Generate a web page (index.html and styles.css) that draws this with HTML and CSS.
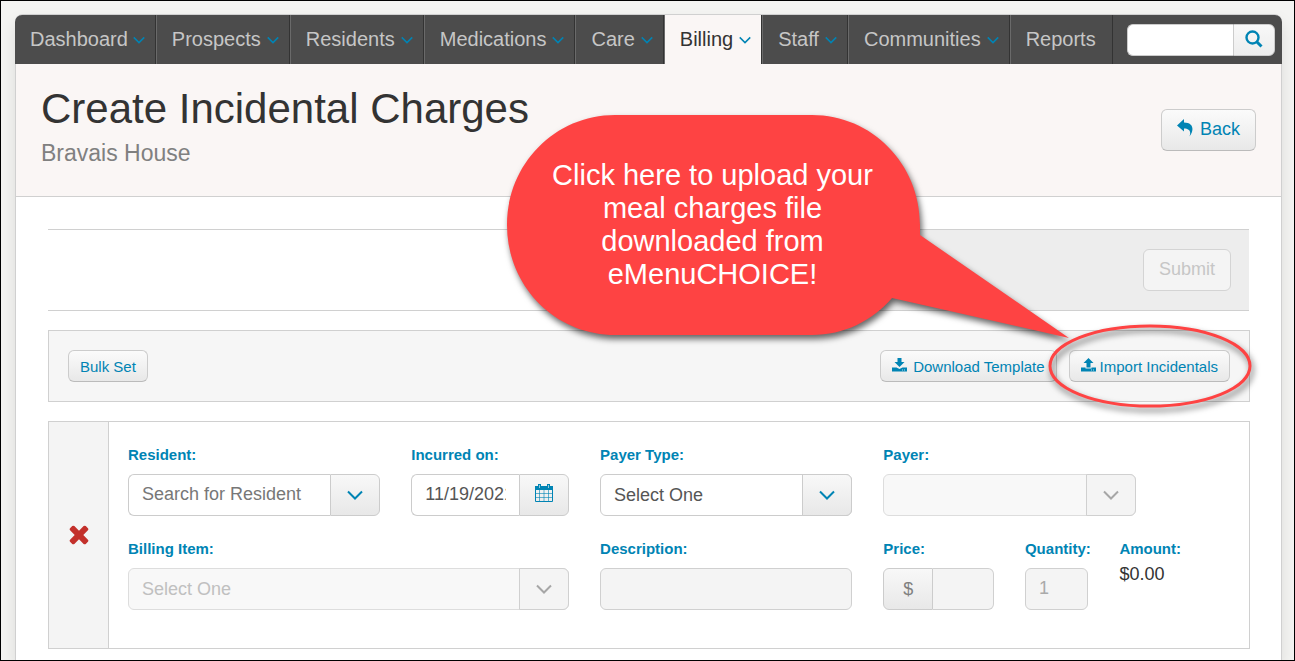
FILE: index.html
```html
<!DOCTYPE html>
<html lang="en">
<head>
    <meta charset="UTF-8">
    <meta name="viewport" content="width=device-width, initial-scale=1.0">
    <title>Create Incidental Charges</title>
    <link rel="stylesheet" href="styles.css">
</head>
<body>
    <svg class="sprite" aria-hidden="true">
        <symbol id="chevron" viewBox="0 0 16 10">
            <path d="M1 1.5 L8 8.5 L15 1.5" fill="none" stroke="currentColor" stroke-width="2"/>
        </symbol>
    </svg>

    <div class="page">
        <nav class="nav">
            <ul class="nav-list">
                <li><a href="#">Dashboard <svg class="caret"><use href="#chevron"/></svg></a></li>
                <li><a href="#">Prospects <svg class="caret"><use href="#chevron"/></svg></a></li>
                <li><a href="#">Residents <svg class="caret"><use href="#chevron"/></svg></a></li>
                <li><a href="#">Medications <svg class="caret"><use href="#chevron"/></svg></a></li>
                <li><a href="#">Care <svg class="caret"><use href="#chevron"/></svg></a></li>
                <li class="active"><a href="#">Billing <svg class="caret"><use href="#chevron"/></svg></a></li>
                <li><a href="#">Staff <svg class="caret"><use href="#chevron"/></svg></a></li>
                <li><a href="#">Communities <svg class="caret"><use href="#chevron"/></svg></a></li>
                <li><a href="#" class="plain">Reports</a></li>
            </ul>
            <form class="search">
                <input type="text" aria-label="Search">
                <button type="button" aria-label="Search">
                    <svg width="18" height="18" viewBox="0 0 18 18"><circle cx="7.5" cy="7.5" r="6" fill="none" stroke="currentColor" stroke-width="2.4"/><path d="M12 12 L16.5 16.5" stroke="currentColor" stroke-width="3"/></svg>
                </button>
            </form>
        </nav>

        <header class="header">
            <div>
                <h1>Create Incidental Charges</h1>
                <p class="community">Bravais House</p>
            </div>
            <button type="button" class="btn">
                <svg class="reply" width="16" height="18" viewBox="0 0 16 18"><path d="M7 0 L0 6.5 L7 12.5 V9.5 C12 9.500 14.500 12 12.500 17.500 C17.500 11 16.500 3.500 7 3.500 Z" fill="currentColor"/></svg>
                Back
            </button>
        </header>

        <main class="content">
            <div class="submit-bar">
                <div class="submit-area">
                    <button type="button" class="btn" disabled>Submit</button>
                </div>
            </div>

            <div class="toolbar">
                <button type="button" class="btn btn-small">Bulk Set</button>
                <div class="toolbar-right">
                    <button type="button" class="btn btn-small btn-download">
                        <svg width="15" height="14" viewBox="0 0 15 14"><path d="M5.500 0 H9.500 V4 H12.500 L7.500 9 L2.500 4 H5.500 Z M0 9.500 H4.500 L7.500 11 L10.500 9.500 H15 V13.500 H0 Z" fill="currentColor"/><path d="M10 12 H11 M12 12 H13" stroke="#fff" stroke-opacity="0.7"/></svg>
                        Download Template
                    </button>
                    <button type="button" class="btn btn-small">
                        <svg width="15" height="14" viewBox="0 0 15 14"><path d="M7.500 0 L12.500 5 H9.500 V9.500 H5.500 V5 H2.500 Z M0 9.500 H4.500 V10.500 H10.500 V9.500 H15 V13.500 H0 Z" fill="currentColor"/><path d="M10 12 H11 M12 12 H13" stroke="#fff" stroke-opacity="0.7"/></svg>
                        Import Incidentals
                    </button>
                </div>
            </div>

            <div class="charge">
                <div class="charge-remove">
                    <button type="button" aria-label="Remove charge">
                        <svg width="20" height="20" viewBox="262 450 1268 1268"><path d="M1490 1322q0 40-28 68l-136 136q-28 28-68 28t-68-28l-294-294-294 294q-28 28-68 28t-68-28l-136-136q-28-28-28-68t28-68l294-294-294-294q-28-28-28-68t28-68l136-136q28-28 68-28t68 28l294 294 294-294q28-28 68-28t68 28l136 136q28 28 28 68t-28 68l-294 294 294 294q28 28 28 68z" transform="translate(0 124)" fill="currentColor"/></svg>
                    </button>
                </div>
                <form class="charge-form">
                    <div class="field span-6">
                        <label for="resident">Resident:</label>
                        <div class="group">
                            <input type="text" id="resident" placeholder="Search for Resident">
                            <button type="button" class="addon" aria-label="Show residents"><svg class="arrow"><use href="#chevron"/></svg></button>
                        </div>
                    </div>
                    <div class="field span-4">
                        <label for="incurred">Incurred on:</label>
                        <div class="group">
                            <input type="text" id="incurred" value="11/19/2021">
                            <button type="button" class="addon" aria-label="Pick a date">
                                <svg class="calendar" width="18" height="18" viewBox="0 0 18 18">
                                    <path d="M0 2 H18 V6 H0 Z M3 0 H6 V3 H3 Z M12 0 H15 V3 H12 Z" fill="currentColor"/>
                                    <path d="M0.5 5 V17.500 H17.500 V5" fill="none" stroke="currentColor"/>
                                    <path d="M4.500 6 V17 M9 6 V17 M13.500 6 V17 M1 9.500 H17 M1 13.500 H17" fill="none" stroke="currentColor" stroke-opacity="0.6"/>
                                    <path d="M4.500 1 V4 M13.500 1 V4" stroke="#f6f6f6" stroke-opacity="0.6"/>
                                </svg>
                            </button>
                        </div>
                    </div>
                    <div class="field span-6">
                        <label for="payer-type">Payer Type:</label>
                        <div class="group">
                            <select id="payer-type"><option>Select One</option></select>
                            <span class="addon addon-over"><svg class="arrow"><use href="#chevron"/></svg></span>
                        </div>
                    </div>
                    <div class="field span-6">
                        <label for="payer">Payer:</label>
                        <div class="group">
                            <select id="payer" disabled><option></option></select>
                            <span class="addon addon-over"><svg class="arrow"><use href="#chevron"/></svg></span>
                        </div>
                    </div>

                    <div class="field span-10 new-row">
                        <label for="billing-item">Billing Item:</label>
                        <div class="group">
                            <select id="billing-item" disabled><option>Select One</option></select>
                            <span class="addon addon-over"><svg class="arrow"><use href="#chevron"/></svg></span>
                        </div>
                    </div>
                    <div class="field span-6">
                        <label for="description">Description:</label>
                        <div class="group">
                            <input type="text" id="description" disabled>
                        </div>
                    </div>
                    <div class="field span-3">
                        <label for="price">Price:</label>
                        <div class="group">
                            <span class="prefix">$</span>
                            <input type="text" id="price" disabled>
                        </div>
                    </div>
                    <div class="field span-2">
                        <label for="quantity">Quantity:</label>
                        <div class="group">
                            <input type="text" id="quantity" value="1" disabled>
                        </div>
                    </div>
                    <div class="field span-3">
                        <label for="amount">Amount:</label>
                        <output id="amount">$0.00</output>
                    </div>
                </form>
            </div>
        </main>

        <div class="callout">
            <svg width="770" height="320" viewBox="495 105 770 320">
                <path d="M615 115 H812 C872 115 920 164 920 225 V235 L1069 338 L892 298 C872 321 844 335 812 335 H615 C555 335 507 286 507 225 C507 164 555 115 615 115 Z" fill="#fe4343"/>
                <ellipse cx="1150" cy="366" rx="100" ry="40" fill="none" stroke="#fe4343" stroke-width="3"/>
            </svg>
            <p>Click here to upload your meal charges file downloaded from eMenuCHOICE!</p>
        </div>
    </div>
</body>
</html>
```
FILE: styles.css
```css
* {
    box-sizing: border-box;
}
body {
    display: flex;
    flex-direction: column;
    min-height: 100vh;
    margin: 0;
    padding: 13px 12px 0 14px;
    border: 1px solid #000;
    background-color: #f4f4f2;
    color: #333;
    font-family: Arial, "Liberation Sans", sans-serif;
    font-size: 18px;
}
input, select, button {
    margin: 0;
    font-family: inherit;
    font-size: 18px;
}
.sprite {
    position: absolute;
    width: 0;
    height: 0;
}
.page {
    position: relative;
    flex: 1;
    border: 1px solid #d0d0d0;
    border-bottom: none;
    border-radius: 8px 8px 0 0;
    background-color: #fff;
    box-shadow: 0 8px 16px rgba(0, 0, 0, 0.1);
}

/* navigation */
.nav {
    display: flex;
    justify-content: space-between;
    align-items: center;
    height: 49px;
    margin: 0 -1px;
    padding-right: 7px;
    border-radius: 7px 7px 0 0;
    background-color: #4c4c4c;
}
.nav-list {
    display: flex;
    margin: 0;
    padding: 0;
    list-style: none;
}
.nav-list li {
    border-left: 1px solid #6a6a6a;
    border-right: 1px solid #333;
}
.nav-list li:first-child {
    border-left: none;
}
.nav-list a {
    display: flex;
    align-items: center;
    gap: 6px;
    height: 49px;
    padding: 0 10px 0 15px;
    color: #c6c6c6;
    font-size: 20px;
    text-decoration: none;
}
.nav-list li:first-child a {
    gap: 5px;
}
.nav-list .plain {
    padding-right: 16px;
}
.nav-list .active {
    background-color: #faf6f5;
}
.nav-list .active a {
    color: #333;
}
.caret {
    width: 12px;
    height: 8px;
    color: #0084b4;
}
.search {
    display: flex;
    width: 148px;
    height: 32px;
}
.search input {
    flex: 1;
    min-width: 0;
    border: 1px solid #ccc;
    border-right: none;
    border-radius: 6px 0 0 6px;
    background-color: #fff;
}
.search button {
    display: flex;
    align-items: center;
    justify-content: center;
    width: 42px;
    padding: 0 0 2px;
    border: 1px solid #ccc;
    border-radius: 0 6px 6px 0;
    background: linear-gradient(#f8f8f8, #ededed);
    color: #0084b4;
}

/* page header */
.header {
    display: flex;
    justify-content: space-between;
    align-items: flex-start;
    min-height: 133px;
    padding: 20px 25px 0;
    border-bottom: 1px solid #d0d0d0;
    background-color: #faf6f5;
}
.header .btn {
    margin-top: 25px;
}
h1 {
    margin: 0;
    font-size: 42px;
    font-weight: normal;
    line-height: 50px;
}
.community {
    margin: 6px 0 0;
    color: #808080;
    font-size: 23px;
    line-height: 26px;
}

/* buttons */
.btn {
    display: flex;
    align-items: center;
    gap: 7px;
    height: 42px;
    padding: 0 15px 2px;
    border: 1px solid #ccc;
    border-bottom-color: #bbb;
    border-radius: 6px;
    background: linear-gradient(#fbfbfb, #e8e8e8);
    color: #0084b4;
    white-space: nowrap;
}
.btn:disabled {
    border-color: #d4d4d4;
    background: #f4f4f4;
    color: #c6c6c6;
}
.btn-small {
    gap: 4px;
    height: 32px;
    padding: 0 11px;
    font-size: 15px;
}
.btn-small svg {
    margin-bottom: 2px;
}
.btn-download {
    gap: 6px;
}
.reply {
    margin-bottom: 3px;
}

.content {
    padding: 32px 32px 11px;
}
.submit-bar {
    display: flex;
    justify-content: flex-end;
    border-top: 1px solid #d0d0d0;
    border-bottom: 1px solid #d0d0d0;
}
.submit-area {
    display: flex;
    justify-content: flex-end;
    width: 50%;
    padding: 19px 18px;
    background-color: #ededed;
}
.toolbar {
    display: flex;
    justify-content: space-between;
    margin: 19px -1px 19px 0;
    padding: 19px;
    border: 1px solid #d0d0d0;
    background-color: #f6f6f6;
}
.toolbar-right {
    display: flex;
    gap: 12px;
}

/* charge row */
.charge {
    display: flex;
    margin-right: -1px;
    border: 1px solid #d0d0d0;
}
.charge-remove {
    display: flex;
    align-items: center;
    justify-content: center;
    width: 60px;
    border-right: 1px solid #d0d0d0;
    background-color: #f4f4f4;
}
.charge-remove button {
    padding: 0;
    border: none;
    background: none;
    color: #c3302b;
    line-height: 0;
}
.charge-form {
    display: grid;
    flex: 1;
    grid-template-columns: repeat(24, minmax(0, 1fr));
    gap: 23px 31px;
    padding: 23px 19px 38px;
}
.field {
    display: flex;
    flex-direction: column;
}
.span-2 { grid-column: span 2; }
.span-3 { grid-column: span 3; }
.span-4 { grid-column: span 4; }
.span-6 { grid-column: span 6; }
.span-10 { grid-column: span 10; }
.new-row { grid-column: 1 / span 10; }
.field label {
    margin-bottom: 9px;
    color: #0084b4;
    font-size: 15px;
    font-weight: bold;
    line-height: 20px;
    white-space: nowrap;
}
.field output {
    line-height: 20px;
    margin-top: -4px;
}
.group {
    position: relative;
    display: flex;
    height: 42px;
}
.group input, .group select {
    flex: 1;
    min-width: 0;
    padding: 0 13px;
    border: 1px solid #ccc;
    border-radius: 6px;
    background-color: #fff;
    color: #555;
    appearance: none;
}
.group input {
    padding-bottom: 2px;
}
.group input:not(:last-child) {
    border-right: none;
    border-radius: 6px 0 0 6px;
}
.group input:not(:first-child) {
    border-radius: 0 6px 6px 0;
}
.group input::placeholder {
    color: #777;
}
.group input:disabled {
    border-color: #d0d0d0;
    background-color: #f4f4f4;
    color: #aaa;
}
.group select:disabled {
    border-color: #ddd;
    background-color: #f8f8f8;
    color: #c0c0c0;
    opacity: 1;
}
.addon, .prefix {
    display: flex;
    align-items: center;
    justify-content: center;
    width: 50px;
    padding: 0;
    border: 1px solid #ccc;
    border-radius: 0 6px 6px 0;
    background: linear-gradient(#f8f8f8, #e8e8e8);
    color: #0084b4;
}
.addon-over {
    position: absolute;
    top: 0;
    right: 0;
    height: 42px;
    pointer-events: none;
}
select:disabled + .addon {
    border-color: #d0d0d0;
    background: #f4f4f4;
    color: #a6a6a6;
}
.prefix {
    border-radius: 6px 0 0 6px;
    color: #808080;
}
.prefix + input {
    border-left: none;
}
.arrow {
    width: 16px;
    height: 10px;
}
.calendar {
    margin-bottom: 5px;
}

/* help callout */
.callout {
    position: absolute;
    top: 90px;
    right: 16px;
    width: 770px;
    height: 320px;
    pointer-events: none;
}
.callout svg {
    display: block;
    filter: drop-shadow(2px 4px 3px rgba(0, 0, 0, 0.6));
}
.callout p {
    position: absolute;
    top: 54px;
    left: 11px;
    width: 413px;
    margin: 0;
    padding: 0 40px;
    color: #fff;
    font-size: 29px;
    line-height: 33px;
    text-align: center;
}
```
